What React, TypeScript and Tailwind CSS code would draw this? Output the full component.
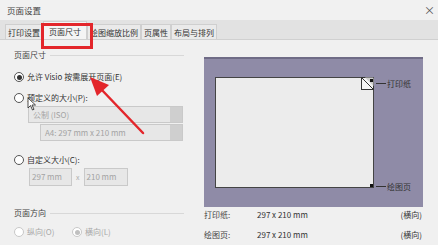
import React from "react";

const font = { fontFamily: '"Noto Sans CJK SC", "Microsoft YaHei", sans-serif' };

const Radio = ({ checked, disabled }: { checked?: boolean; disabled?: boolean }) => (
  <span
    className={`flex items-center justify-center w-[10px] h-[10px] rounded-full border bg-white shrink-0 ${
      disabled ? "border-[#c8c8c8]" : "border-[#555]"
    }`}
  >
    {checked && (
      <span className={`w-[5px] h-[5px] rounded-full ${disabled ? "bg-[#c0c0c0]" : "bg-[#333]"}`} />
    )}
  </span>
);

const GroupLabel = ({ text }: { text: string }) => (
  <div className="flex items-center gap-1 pr-3">
    <span className="text-[#444]">{text}</span>
    <span className="flex-1 h-px bg-[#d8d8d8]" />
  </div>
);

const Select = ({ text }: { text: string }) => (
  <div className="flex h-[17px] border border-[#c9c9c9] bg-[#e7e7e7]">
    <span className="flex-1 pl-1 leading-[15px] text-[#a3a3a3]">{text}</span>
    <span className="w-[12px] bg-[#cfcfcf]" />
  </div>
);

const tabs = ["打印设置", "页面尺寸", "绘图缩放比例", "页属性", "布局与排列"];

export default function App() {
  return (
    <div className="relative w-[438px] h-[245px] overflow-hidden bg-[#f0f0f0] text-[8px] text-[#333]" style={font}>
      {/* title bar */}
      <div className="flex items-center justify-between h-[20px] pl-[7px] pr-[3px] bg-[#f1f1f1]">
        <span className="text-[#444] text-[8.5px]">页面设置</span>
        <span className="text-[11px] text-[#555]">×</span>
      </div>

      {/* tabs */}
      <div className="flex items-end h-[20px] pl-[5px] bg-[#e2e2e2] border-b border-[#d0d0d0]">
        {tabs.map((t, i) => (
          <div
            key={t}
            className={`border border-b-0 border-[#cfcfcf] ${
              i === 1
                ? "h-[18px] bg-[#f4f4f4] leading-[19px] px-[5px]"
                : "h-[15px] leading-[15px] bg-[#eaeaea] px-[2px]"
            }`}
          >
            {t}
          </div>
        ))}
      </div>

      {/* body */}
      <div className="flex pt-[9px]">
        {/* left column */}
        <div className="w-[196px] pl-[14px] flex flex-col">
          <GroupLabel text="页面尺寸" />
          <div className="flex items-center gap-[3px] mt-[10px] h-[12px]">
            <Radio checked />
            <span>允许 Visio 按需展开页面(E)</span>
          </div>
          <div className="flex items-center gap-[3px] mt-[9px] h-[12px]">
            <Radio />
            <span>预定义的大小(P):</span>
          </div>
          <div className="ml-[14px] mr-[13px] mt-[2px]">
            <Select text="公制 (ISO)" />
          </div>
          <div className="ml-[26px] mr-[13px] mt-[1px]">
            <Select text="A4:  297 mm x 210 mm" />
          </div>
          <div className="flex items-center gap-[3px] mt-[13px] h-[12px]">
            <Radio />
            <span>自定义大小(C):</span>
          </div>
          <div className="flex items-center ml-[15px] mt-[2px] gap-[4px]">
            <div className="w-[43px] h-[18px] border border-[#c9c9c9] bg-[#e7e7e7] pl-[2px] leading-[16px] text-[#a3a3a3]">
              297 mm
            </div>
            <span className="text-[#aaa] text-[7px]">x</span>
            <div className="w-[44px] h-[18px] border border-[#c9c9c9] bg-[#e7e7e7] pl-[2px] leading-[16px] text-[#a3a3a3]">
              210 mm
            </div>
          </div>
          <div className="mt-[21px]">
            <GroupLabel text="页面方向" />
          </div>
          <div className="flex items-center mt-[7px] h-[12px] text-[#a8a8a8]">
            <div className="flex items-center gap-[3px] w-[58px]">
              <Radio disabled />
              <span>纵向(O)</span>
            </div>
            <div className="flex items-center gap-[3px]">
              <Radio checked disabled />
              <span>横向(L)</span>
            </div>
          </div>
        </div>

        {/* right column */}
        <div className="w-[219px] ml-[8px] mt-[8px] flex flex-col">
          <div className="relative h-[150px] bg-[#8f8ba7] border-t-2 border-[#6f6b86]">
            <div className="absolute left-[11px] top-[18px] w-[159px] h-[111px] bg-[#ececec] border border-[#444]">
              <svg className="absolute right-[-1px] top-[-1px]" width="13" height="13" viewBox="0 0 13 13">
                <rect x="0.5" y="0.5" width="12" height="12" fill="#f4f4f4" stroke="#333" />
                <path d="M0.5 0.5 L12.5 12.5" stroke="#333" />
                <path d="M4 0.5 L12.5 0.5 L12.5 9 Z" fill="#cfcfcf" />
                <rect x="9" y="2" width="3" height="3" fill="#111" />
              </svg>
              <span className="absolute right-[0px] bottom-[0px] w-[3px] h-[3px] bg-[#111]" />
            </div>
            <span className="absolute left-[172px] top-[24px] w-[10px] h-px bg-[#333]" />
            <span className="absolute left-[183px] top-[19px] text-[#333]">打印纸</span>
            <span className="absolute left-[172px] top-[127px] w-[10px] h-px bg-[#333]" />
            <span className="absolute left-[183px] top-[122px] text-[#333]">绘图页</span>
          </div>
          <div className="flex items-center mt-[1px] h-[14px] pr-[1px]">
            <span className="w-[53px] text-[#444]">打印纸:</span>
            <span className="flex-1">297 x 210 mm</span>
            <span>(横向)</span>
          </div>
          <div className="flex items-center mt-[6px] h-[14px] pr-[1px]">
            <span className="w-[53px] text-[#444]">绘图页:</span>
            <span className="flex-1">297 x 210 mm</span>
            <span>(横向)</span>
          </div>
        </div>
      </div>

      {/* annotation: red box around tab */}
      <div className="absolute left-[41px] top-[23px] w-[52px] h-[26px] border-[3px] border-[#e3262b]" />
      {/* annotation: arrow */}
      <svg className="absolute left-0 top-0 pointer-events-none" width="438" height="245">
        <line x1="143" y1="133" x2="100" y2="88" stroke="#e3262b" strokeWidth="2.5" strokeLinecap="round" />
        <polygon points="90,77 109,85 97,96" fill="#e3262b" />
      </svg>
      {/* cursor */}
      <svg className="absolute left-[27px] top-[97px]" width="10" height="14" viewBox="0 0 10 14">
        <path d="M1 1 L1 11 L3.5 8.5 L5.5 13 L7 12.3 L5 8 L8.5 8 Z" fill="#fff" stroke="#222" strokeWidth="0.8" />
      </svg>
    </div>
  );
}
